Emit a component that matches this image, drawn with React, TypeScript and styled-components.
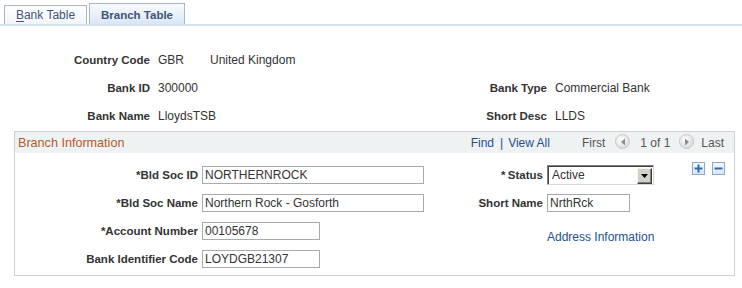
import React from "react";
import styled, { createGlobalStyle } from "styled-components";

const GlobalStyle = createGlobalStyle`
  html, body {
    margin: 0;
    padding: 0;
    background: #ffffff;
  }
  body {
    font-family: "Liberation Sans", Arial, sans-serif;
    font-size: 12px;
    color: #333333;
  }
`;

export default function App() {
    return (
        <Page>
            <GlobalStyle/>
            <TabStrip>
                <Tab><u>B</u>ank Table</Tab>
                <Tab $active>Branch Table</Tab>
            </TabStrip>

            <HeaderGrid>
                <Label>Country Code</Label>
                <Value>
                    <Code>GBR</Code>United Kingdom
                </Value>
                <span/>
                <span/>

                <Label>Bank ID</Label>
                <Value>300000</Value>
                <Label>Bank Type</Label>
                <Value>Commercial Bank</Value>

                <Label>Bank Name</Label>
                <Value>LloydsTSB</Value>
                <Label>Short Desc</Label>
                <Value>LLDS</Value>
            </HeaderGrid>

            <Group>
                <GroupHeader>
                    <GroupTitle>Branch Information</GroupTitle>
                    <Nav>
                        <NavLink>Find</NavLink>
                        <Pipe>|</Pipe>
                        <NavLink>View All</NavLink>
                        <NavText $gap={ 32 }>First</NavText>
                        <ArrowButton $gap={ 10 }>
                            <svg width="6" height="8" viewBox="0 0 6 8">
                                <path d="M5 0.5 L1 4 L5 7.5 Z" fill="#8c8c8c"/>
                            </svg>
                        </ArrowButton>
                        <NavText $gap={ 10 }>1 of 1</NavText>
                        <ArrowButton $gap={ 9 }>
                            <svg width="6" height="8" viewBox="0 0 6 8">
                                <path d="M1 0.5 L5 4 L1 7.5 Z" fill="#8c8c8c"/>
                            </svg>
                        </ArrowButton>
                        <NavText $gap={ 7 }>Last</NavText>
                    </Nav>
                </GroupHeader>

                <GroupBody>
                    <FieldGrid $labelWidth={ 183 }>
                        <Label>*Bld Soc ID</Label>
                        <TextInput $w={ 222 } value="NORTHERNROCK" readOnly/>
                        <Label>*Bld Soc Name</Label>
                        <TextInput $w={ 222 } value="Northern Rock - Gosforth" readOnly/>
                        <Label>*Account Number</Label>
                        <TextInput $w={ 118 } value="00105678" readOnly/>
                        <Label>Bank Identifier Code</Label>
                        <TextInput $w={ 118 } value="LOYDGB21307" readOnly/>
                    </FieldGrid>

                    <FieldGrid $labelWidth={ 100 } $offset={ 19 }>
                        <Label>*&thinsp;Status</Label>
                        <Combo>
                            <ComboText>Active</ComboText>
                            <ComboButton>
                                <svg width="7" height="4" viewBox="0 0 7 4">
                                    <path d="M0 0 H7 L3.5 4 Z" fill="#000"/>
                                </svg>
                            </ComboButton>
                        </Combo>
                        <Label>Short Name</Label>
                        <TextInput $w={ 83 } value="NrthRck" readOnly/>
                        <span/>
                        <AddressLink>Address Information</AddressLink>
                    </FieldGrid>

                    <RowButtons>
                        <RowButton>
                            <svg width="9" height="9" viewBox="0 0 9 9">
                                <path d="M3.5 0.5 H5.5 V3.5 H8.5 V5.5 H5.5 V8.5 H3.5 V5.5 H0.5 V3.5 H3.5 Z" fill="#2a6db5"/>
                            </svg>
                        </RowButton>
                        <RowButton>
                            <svg width="9" height="9" viewBox="0 0 9 9">
                                <path d="M0.5 3.5 H8.5 V5.5 H0.5 Z" fill="#2a6db5"/>
                            </svg>
                        </RowButton>
                    </RowButtons>
                </GroupBody>
            </Group>
        </Page>
    );
}

const Page = styled.div`
  width: 742px;
  height: 288px;
  overflow: hidden;
  background: #ffffff;
`;

const TabStrip = styled.div`
  display: flex;
  align-items: flex-end;
  height: 21px;
  padding: 3px 0 0 4px;
  border-bottom: 2px solid #d4e1f0;
  gap: 2px;
`;

const Tab = styled.div<{ $active?: boolean }>`
  box-sizing: border-box;
  display: flex;
  align-items: center;
  justify-content: center;
  height: ${ p => p.$active ? "21px" : "19px" };
  width: ${ p => p.$active ? "96px" : "83px" };
  border: 1px solid #aab6c8;
  border-bottom: none;
  background: ${ p => p.$active
    ? "linear-gradient(#f8fbfe, #dbe6f4)"
    : "linear-gradient(#ffffff, #f2f4f7)" };
  color: #3e5577;
  font-size: ${ p => p.$active ? "11.5px" : "12px" };
  font-weight: ${ p => p.$active ? 700 : 400 };
  padding-top: ${ p => p.$active ? "1px" : "0" };

  u {
    text-decoration-thickness: 1px;
    text-underline-offset: 2px;
  }
`;

const HeaderGrid = styled.div`
  display: grid;
  grid-template-columns: 150px 231px 150px 1fr;
  grid-auto-rows: 28px;
  column-gap: 8px;
  align-items: center;
  margin-top: 20px;
`;

const Label = styled.div`
  text-align: right;
  font-weight: 700;
  font-size: 11.5px;
  color: #333333;
  white-space: nowrap;
`;

const Value = styled.div`
  font-size: 12px;
  color: #333333;
  white-space: nowrap;
`;

const Code = styled.span`
  display: inline-block;
  width: 52px;
`;

const Group = styled.div`
  box-sizing: border-box;
  width: 721px;
  height: 145px;
  margin: 1px 0 0 14px;
  border: 1px solid #c9d0d6;
`;

const GroupHeader = styled.div`
  display: flex;
  align-items: center;
  justify-content: space-between;
  height: 21px;
  padding: 0 10px 0 3px;
  background: #eef2f3;
`;

const GroupTitle = styled.div`
  color: #b4592a;
  font-size: 12.6px;
`;

const Nav = styled.div`
  display: flex;
  align-items: center;
  font-size: 12px;
  padding-top: 1px;
`;

const NavLink = styled.span`
  color: #24508e;
`;

const Pipe = styled.span`
  color: #24508e;
  margin: 0 5px 0 6px;
`;

const NavText = styled.span<{ $gap: number }>`
  color: #555555;
  margin-left: ${ p => p.$gap }px;
`;

const ArrowButton = styled.span<{ $gap: number }>`
  box-sizing: border-box;
  display: inline-flex;
  align-items: center;
  justify-content: center;
  width: 15px;
  height: 15px;
  margin-left: ${ p => p.$gap }px;
  margin-top: -3px;
  border-radius: 50%;
  border: 1px solid #c6c6c6;
  background: radial-gradient(circle at 40% 35%, #ffffff, #dedede 70%, #cfcfcf);
`;

const GroupBody = styled.div`
  display: flex;
  align-items: flex-start;
  padding: 8px 9px 0 0;
`;

const FieldGrid = styled.div<{ $labelWidth: number; $offset?: number }>`
  display: grid;
  grid-template-columns: ${ p => p.$labelWidth }px auto;
  grid-auto-rows: 28px;
  column-gap: 4px;
  align-items: center;
  justify-items: start;
  margin-left: ${ p => p.$offset ?? 0 }px;

  & > ${ Label } {
    justify-self: end;
  }
`;

const TextInput = styled.input<{ $w: number }>`
  box-sizing: border-box;
  width: ${ p => p.$w }px;
  height: 18px;
  margin: 0;
  padding: 0 2px;
  border: 1px solid #a6abb0;
  background: #ffffff;
  font-family: "Liberation Sans", Arial, sans-serif;
  font-size: 12px;
  color: #333333;
  outline: none;
`;

const Combo = styled.div`
  box-sizing: border-box;
  display: flex;
  align-items: center;
  width: 107px;
  height: 20px;
  border: 1px solid #7f7f7f;
  border-right-color: #d8d8d8;
  border-bottom-color: #d8d8d8;
  box-shadow: inset 1px 1px 0 #404040;
  background: #ffffff;
`;

const ComboText = styled.span`
  flex: 1;
  padding-left: 4px;
  font-size: 12px;
  color: #333333;
`;

const ComboButton = styled.span`
  box-sizing: border-box;
  display: flex;
  align-items: center;
  justify-content: center;
  width: 15px;
  height: 16px;
  margin: 1px 1px 0 0;
  background: #d4d0c8;
  border-top: 1px solid #f4f4f4;
  border-left: 1px solid #f4f4f4;
  border-right: 1px solid #404040;
  border-bottom: 1px solid #404040;
  box-shadow: inset -1px -1px 0 #808080;
`;

const AddressLink = styled.span`
  margin-top: 12px;
  color: #24508e;
  font-size: 12px;
  white-space: nowrap;
`;

const RowButtons = styled.div`
  display: flex;
  gap: 7px;
  margin: 1px 0 0 auto;
`;

const RowButton = styled.span`
  box-sizing: border-box;
  display: inline-flex;
  align-items: center;
  justify-content: center;
  width: 13px;
  height: 13px;
  border: 1px solid #8ea7c4;
  background: linear-gradient(#f4f8fc, #d9e6f3);
`;
